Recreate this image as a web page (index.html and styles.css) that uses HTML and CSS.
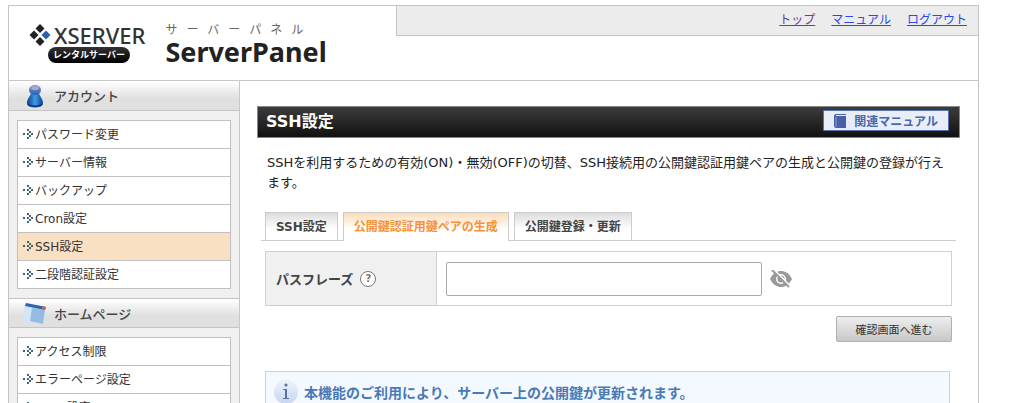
FILE: index.html
```html
<!DOCTYPE html>
<html lang="ja">
<head>
<meta charset="UTF-8">
<meta name="viewport" content="width=device-width, initial-scale=1">
<title>サーバーパネル - SSH設定</title>
<link rel="stylesheet" href="styles.css">
</head>
<body>

<!-- メニューの矢印 -->
<svg class="defs" aria-hidden="true">
  <symbol id="arrow" viewBox="0 0 10 10">
    <g fill="#3f6670">
      <rect x="0" y="4" width="2" height="2"/>
      <rect x="4" y="0" width="2" height="2"/>
      <rect x="6" y="2" width="2" height="2"/>
      <rect x="4" y="4" width="2" height="2"/>
      <rect x="8" y="4" width="2" height="2"/>
      <rect x="6" y="6" width="2" height="2"/>
      <rect x="4" y="8" width="2" height="2"/>
    </g>
  </symbol>
</svg>

<div class="wrapper">
  <header class="header">
    <div class="brand">
      <div class="logo">
        <div class="logo-top">
          <svg class="logo-mark" viewBox="0 0 22 22">
            <path d="M11 0l4.500 4.500-4.500 4.500-4.500-4.500z" fill="#222"/>
            <path d="M5 6.500l4.500 4.500-4.500 4.500-4.500-4.500z" fill="#222"/>
            <path d="M17 6.500l4.500 4.500-4.500 4.500-4.500-4.500z" fill="#2a62a8"/>
            <path d="M11 13l4.500 4.500-4.500 4.500-4.500-4.500z" fill="#222"/>
          </svg>
          <span class="logo-name">XSERVER</span>
        </div>
        <span class="logo-badge">レンタルサーバー</span>
      </div>
      <div class="panel-name">
        <span class="panel-kana">サーバーパネル</span>
        <span class="panel-title">ServerPanel</span>
      </div>
    </div>
    <nav class="top-nav">
      <a href="#" class="visited">トップ</a>
      <a href="#">マニュアル</a>
      <a href="#">ログアウト</a>
    </nav>
  </header>

  <div class="container">
    <aside class="sidebar">
      <h2 class="side-title">
        <svg class="side-icon" viewBox="0 0 24 24">
          <defs>
            <linearGradient id="bodyBlue" x1="0" y1="0" x2="1" y2="0">
              <stop offset="0" stop-color="#103c86"/>
              <stop offset=".5" stop-color="#3f9be8"/>
              <stop offset="1" stop-color="#123f8c"/>
            </linearGradient>
            <linearGradient id="headBlue" x1="0" y1="0" x2="0" y2="1">
              <stop offset="0" stop-color="#8794c4"/>
              <stop offset="1" stop-color="#2760b4"/>
            </linearGradient>
          </defs>
          <path d="M8 9c-1 4-4 6-4 10 0 6 16 6 16 0 0-4-3-6-4-10z" fill="url(#bodyBlue)"/>
          <path d="M5 20c2 3 12 3 14 0" fill="none" stroke="#123b86" stroke-width="2"/>
          <ellipse cx="12" cy="6" rx="6" ry="5" fill="url(#headBlue)"/>
          <ellipse cx="12" cy="4" rx="4" ry="2" fill="#a3abce"/>
        </svg>
        アカウント
      </h2>
      <ul class="menu">
        <li><a href="#"><svg class="arrow"><use href="#arrow"/></svg>パスワード変更</a></li>
        <li><a href="#"><svg class="arrow"><use href="#arrow"/></svg>サーバー情報</a></li>
        <li><a href="#"><svg class="arrow"><use href="#arrow"/></svg>バックアップ</a></li>
        <li><a href="#"><svg class="arrow"><use href="#arrow"/></svg>Cron設定</a></li>
        <li><a href="#" class="active"><svg class="arrow"><use href="#arrow"/></svg>SSH設定</a></li>
        <li><a href="#"><svg class="arrow"><use href="#arrow"/></svg>二段階認証設定</a></li>
      </ul>

      <h2 class="side-title">
        <svg class="side-icon" viewBox="0 0 24 24">
          <path d="M2 2l21 4-2 17-21-4z" fill="#d3e6f7"/>
          <path d="M9 7l13 2-2 14-13-3z" fill="#94bce2"/>
          <path d="M3 2l20 4-1 3L2 5z" fill="#2d64af"/>
          <path d="M20 5l3 1-1 3-3-1z" fill="#d5694e"/>
        </svg>
        ホームページ
      </h2>
      <ul class="menu">
        <li><a href="#"><svg class="arrow"><use href="#arrow"/></svg>アクセス制限</a></li>
        <li><a href="#"><svg class="arrow"><use href="#arrow"/></svg>エラーページ設定</a></li>
        <li><a href="#"><svg class="arrow"><use href="#arrow"/></svg>MIME設定</a></li>
      </ul>
    </aside>

    <main class="main">
      <div class="page-title">
        <h1>SSH設定</h1>
        <a href="#" class="manual">
          <svg class="book" viewBox="0 0 12 14">
            <path d="M2 0h10v1H2v1h10v12H2c-1 0-2-1-2-2V2c0-1 1-2 2-2z" fill="#4864a6"/>
            <path d="M2 3v10" stroke="#8fa1ca" stroke-width="1"/>
          </svg>
          関連マニュアル
        </a>
      </div>

      <p class="lead">SSHを利用するための有効(ON)・無効(OFF)の切替、SSH接続用の公開鍵認証用鍵ペアの生成と公開鍵の登録が行えます。</p>

      <ul class="tabs">
        <li><a href="#">SSH設定</a></li>
        <li><a href="#" class="active">公開鍵認証用鍵ペアの生成</a></li>
        <li><a href="#">公開鍵登録・更新</a></li>
      </ul>

      <form class="form">
        <div class="form-row">
          <div class="form-head">
            <label for="passphrase">パスフレーズ</label>
            <button type="button" class="help">?</button>
          </div>
          <div class="form-body">
            <input type="password" id="passphrase">
            <button type="button" class="eye" aria-label="表示切替">
              <svg viewBox="0 0 22 18">
                <path d="M0 9C3 3 7 1 11 1s8 2 11 8c-3 6-7 8-11 8S3 15 0 9z" fill="#999"/>
                <circle cx="11" cy="9" r="5" fill="#fff"/>
                <circle cx="11" cy="9" r="3.500" fill="#999"/>
                <path d="M4 0l17 17" stroke="#fff" stroke-width="2"/>
                <path d="M2 0l17 17" stroke="#999" stroke-width="2"/>
              </svg>
            </button>
          </div>
        </div>
        <button type="submit" class="submit">確認画面へ進む</button>
      </form>

      <div class="info">
        <svg class="info-icon" viewBox="0 0 24 24">
          <defs>
            <linearGradient id="infoBg" x1="0" y1="0" x2="0" y2="1">
              <stop offset="0" stop-color="#edf3fc"/>
              <stop offset="1" stop-color="#c6d6ef"/>
            </linearGradient>
          </defs>
          <circle cx="12" cy="12" r="12" fill="url(#infoBg)"/>
          <circle cx="12" cy="5" r="1.500" fill="#587299"/>
          <path d="M9 9h4v9h2v1H9v-1h2v-8H9z" fill="#587299"/>
        </svg>
        <strong>本機能のご利用により、サーバー上の公開鍵が更新されます。</strong>
      </div>
    </main>
  </div>
</div>

</body>
</html>
```
FILE: styles.css
```css
* {
  box-sizing: border-box;
}
body {
  margin: 0;
  padding: 5px 8px 0;
  height: 100vh;
  overflow: hidden;
  background: #fff;
  color: #222;
  font-family: "DejaVu Sans", "Noto Sans CJK JP", sans-serif;
  font-size: 12px;
}
h1, h2, p, ul {
  margin: 0;
  padding: 0;
}
ul {
  list-style: none;
}
button, input {
  font-family: inherit;
}
.defs {
  display: none;
}
.wrapper {
  max-width: 971px;
  border: 1px solid #c4c4c4;
}

/* ヘッダー */
.header {
  display: flex;
  align-items: flex-start;
  height: 75px;
  border-bottom: 1px solid #c8c8c8;
}
.brand {
  display: flex;
  gap: 20px;
  width: 387px;
  padding: 16px 0 0 20px;
}
.logo {
  display: flex;
  flex-direction: column;
}
.logo-top {
  display: flex;
  align-items: center;
  gap: 3px;
  height: 25px;
}
.logo-mark {
  width: 22px;
  height: 22px;
}
.logo-name {
  color: #333;
  font-family: "Noto Sans", sans-serif;
  font-size: 22px;
  font-weight: 500;
  line-height: 24px;
}
.logo-badge {
  width: 82px;
  height: 16px;
  margin-left: 19px;
  border-radius: 8px;
  background: linear-gradient(#333, #000);
  color: #fff;
  font-size: 9px;
  font-weight: bold;
  line-height: 16px;
  text-align: center;
}
.panel-name {
  display: flex;
  flex-direction: column;
}
.panel-kana {
  color: #666;
  font-size: 12px;
  line-height: 16px;
  letter-spacing: 9px;
}
.panel-title {
  color: #222;
  font-family: "Noto Sans", sans-serif;
  font-size: 27px;
  font-weight: bold;
  line-height: 28px;
}
.top-nav {
  display: flex;
  flex: 1;
  justify-content: flex-end;
  gap: 16px;
  padding: 0 11px;
  border-left: 1px solid #c4c4c4;
  border-bottom: 1px solid #c4c4c4;
  background: #ececec;
  line-height: 29px;
}
.top-nav a {
  color: #2a48f0;
}
.top-nav a.visited {
  color: #6b3f93;
}

/* サイドメニュー */
.container {
  display: flex;
}
.sidebar {
  flex: 0 0 231px;
  border-right: 1px solid #c8c8c8;
  background: #f0f0f0;
}
.side-title {
  display: flex;
  align-items: center;
  gap: 7px;
  height: 30px;
  padding-left: 14px;
  border-bottom: 1px solid #c4c4c4;
  background: linear-gradient(#fff, #e0e0e0 60%);
  color: #444;
  font-size: 13px;
  font-weight: 500;
}
.menu + .side-title {
  border-top: 1px solid #c4c4c4;
}
.side-icon {
  width: 24px;
  height: 24px;
}
.menu {
  margin: 9px 8px;
  border: 1px solid #c0c0c0;
  background: #fff;
}
.menu li + li {
  border-top: 1px solid #c0c0c0;
}
.menu a {
  display: flex;
  align-items: center;
  gap: 2px;
  height: 27px;
  padding: 0 0 2px 5px;
  color: #333;
  text-decoration: none;
}
.menu a.active {
  background: #fae0c3;
}
.arrow {
  width: 10px;
  height: 10px;
}

/* メイン */
.main {
  flex: 1;
  padding: 25px 18px 0 17px;
}
.page-title {
  display: flex;
  align-items: flex-start;
  justify-content: space-between;
  height: 32px;
  padding: 3px 10px 0 8px;
  border: 1px solid #888;
  background: linear-gradient(#3c3c3c, #111);
}
.page-title h1 {
  color: #fff;
  font-size: 16px;
  line-height: 24px;
}
.manual {
  display: flex;
  align-items: center;
  gap: 8px;
  height: 21px;
  padding: 0 10px;
  border: 1px solid #5873b4;
  border-radius: 1px;
  background: #e8edf8;
  color: #4a66a8;
  font-weight: bold;
  text-decoration: none;
}
.book {
  width: 12px;
  height: 14px;
}
.lead {
  padding: 15px 8px 0 10px;
  font-size: 13px;
  line-height: 20px;
}
.tabs {
  display: flex;
  gap: 5px;
  margin: 19px 4px 0;
  padding-left: 4px;
  border-bottom: 1px solid #ccc;
}
.tabs a {
  display: block;
  height: 28px;
  padding: 0 10px;
  border: 1px solid #ccc;
  border-bottom: 0;
  background: linear-gradient(#ddd, #fff 60%);
  color: #444;
  font-weight: bold;
  line-height: 28px;
  text-decoration: none;
}
.tabs a.active {
  height: 29px;
  margin-bottom: -1px;
  background: linear-gradient(#fbdcb8, #fff 60%);
  color: #f6913c;
}

/* フォーム */
.form {
  display: flex;
  flex-direction: column;
  margin: 10px 8px 0;
}
.form-row {
  display: flex;
  height: 55px;
  border: 1px solid #d0d0d0;
}
.form-head {
  display: flex;
  align-items: center;
  gap: 7px;
  width: 171px;
  padding-left: 10px;
  border-right: 1px solid #d0d0d0;
  background: #f0f0f0;
  color: #444;
  font-size: 13px;
  font-weight: bold;
}
.help {
  width: 16px;
  height: 16px;
  padding: 0;
  border: 1px solid #777;
  border-radius: 50%;
  background: #fff;
  color: #777;
  font-size: 10px;
  font-weight: bold;
  line-height: 14px;
}
.form-body {
  display: flex;
  flex: 1;
  align-items: center;
  gap: 8px;
  padding-left: 9px;
}
.form-body input {
  width: 316px;
  height: 34px;
  padding: 0 8px;
  border: 1px solid #aaa;
  border-radius: 2px;
  background: #fff;
}
.eye {
  width: 22px;
  height: 18px;
  padding: 0;
  border: 0;
  background: none;
}
.submit {
  align-self: flex-end;
  width: 116px;
  height: 26px;
  margin-top: 10px;
  padding: 0;
  border: 1px solid #b0b0b0;
  border-radius: 2px;
  background: linear-gradient(#eee, #c8c8c8);
  color: #333;
  font-size: 11px;
}
.info {
  display: flex;
  align-items: center;
  gap: 6px;
  height: 42px;
  margin: 29px 10px 0 8px;
  padding-left: 8px;
  border: 1px solid #ccd2da;
  background: #f4f8ff;
  color: #4a7ab5;
  font-size: 14px;
}
.info-icon {
  width: 24px;
  height: 24px;
}
```
